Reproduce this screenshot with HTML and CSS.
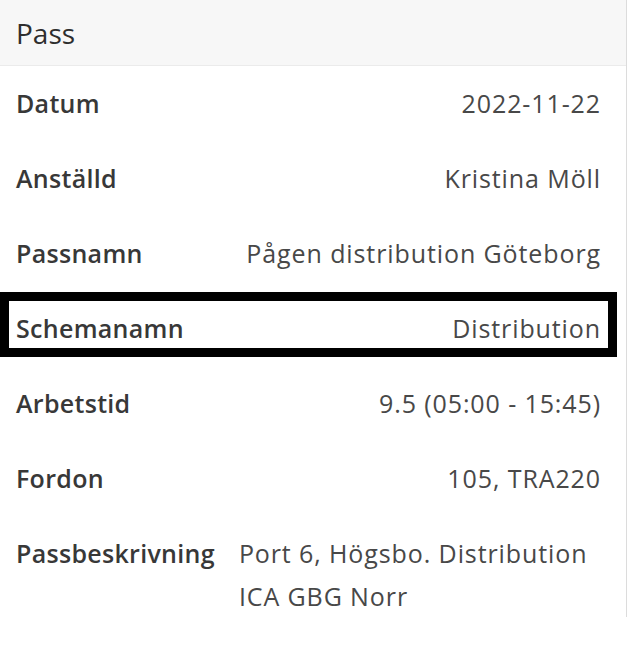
FILE: index.html
```html
<!DOCTYPE html>
<html lang="sv">
<head>
  <meta charset="UTF-8">
  <meta name="viewport" content="width=device-width, initial-scale=1.0">
  <title>Pass</title>
  <link rel="stylesheet" href="styles.css">
</head>
<body>
  <div class="card">
    <div class="card-header">Pass</div>

    <div class="card-body">
      <div class="row">
        <div class="label">Datum</div>
        <div class="value">2022-11-22</div>
      </div>
      <div class="row">
        <div class="label">Anställd</div>
        <div class="value">Kristina Möll</div>
      </div>
      <div class="row">
        <div class="label">Passnamn</div>
        <div class="value">Pågen distribution Göteborg</div>
      </div>
      <div class="row highlighted">
        <div class="label">Schemanamn</div>
        <div class="value">Distribution</div>
      </div>
      <div class="row">
        <div class="label">Arbetstid</div>
        <div class="value">9.5 (05:00 - 15:45)</div>
      </div>
      <div class="row">
        <div class="label">Fordon</div>
        <div class="value">105, TRA220</div>
      </div>
      <div class="row">
        <div class="label">Passbeskrivning</div>
        <div class="value">Port 6, Högsbo. Distribution ICA GBG Norr</div>
      </div>
    </div>
  </div>
</body>
</html>
```

FILE: styles.css
```css
:root {
  --card-border: #dcdcdc;
  --header-bg: #f7f7f7;
  --label-color: #383838;
  --value-color: #484848;
}

body {
  margin: 0;
  background-color: #ffffff;
  font-family: 'Open Sans', 'Noto Sans', sans-serif;
  font-size: 25px;
}

.card {
  width: 627px;
  height: 617px;
  border-right: 1px solid var(--card-border);
  box-sizing: border-box;
}

.card-header {
  height: 66px;
  padding: 0 16px;
  display: flex;
  align-items: center;
  background-color: var(--header-bg);
  border-bottom: 1px solid #ebebeb;
  color: #2e2e2e;
  font-size: 28px;
  box-sizing: border-box;
}

.card-body {
  padding: 0 25px 0 16px;
}

.row {
  position: relative;
  display: flex;
  justify-content: space-between;
  gap: 24px;
  padding: 16px 0;
  line-height: 43px;
}

.label {
  white-space: nowrap;
  font-weight: 600;
  letter-spacing: 0.3px;
  color: var(--label-color);
}

.value {
  color: var(--value-color);
  letter-spacing: 0.9px;
}

.highlighted::after {
  content: '';
  position: absolute;
  top: 1px;
  left: -16px;
  right: -16px;
  height: 65px;
  border: 9px solid #000000;
  box-sizing: border-box;
}
```
